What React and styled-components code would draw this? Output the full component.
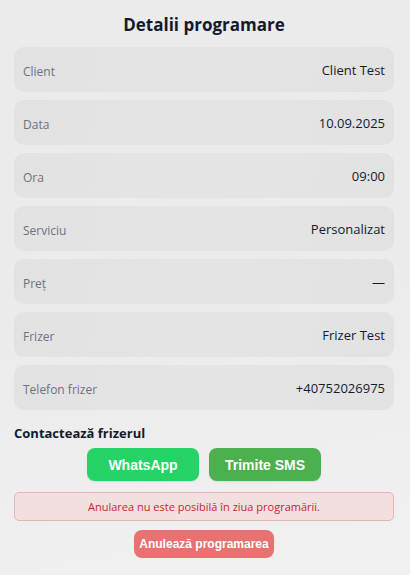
import React from 'react';
import styled, { createGlobalStyle } from 'styled-components';

const GlobalStyle = createGlobalStyle`
  html, body {
    margin: 0;
    padding: 0;
    background: #2b2b2b;
  }
  * {
    box-sizing: border-box;
  }
`;

const Sheet = styled.div`
  width: 410px;
  min-height: 575px;
  background: linear-gradient(170deg, #ebebeb 0%, #ececec 55%, #f1f1f1 100%);
  padding: 11px 16px 16px 14px;
  font-family: 'Open Sans', 'Noto Sans', sans-serif;
  display: flex;
  flex-direction: column;
`;

const Title = styled.h2`
  margin: 0 0 9px;
  font-size: 17px;
  line-height: 27px;
  font-weight: 700;
  color: #141a2e;
  text-align: center;
`;

const List = styled.div`
  display: flex;
  flex-direction: column;
  gap: 8px;
`;

const Row = styled.div`
  height: 45px;
  border-radius: 10px;
  background: linear-gradient(100deg, #e2e2e2 0%, #e5e5e5 50%, #e2e2e2 100%);
  padding: 0 9px;
  display: flex;
  justify-content: space-between;
  align-items: center;
`;

const Label = styled.span`
  font-size: 12px;
  color: #6b7280;
  padding-top: 3px;
`;

const Value = styled.span`
  font-size: 13px;
  font-weight: 500;
  color: #141a2e;
`;

const SectionTitle = styled.div`
  margin-top: 14px;
  font-size: 13px;
  line-height: 18px;
  font-weight: 700;
  color: #141a2e;
`;

const Buttons = styled.div`
  margin-top: 6px;
  display: flex;
  justify-content: center;
  gap: 10px;
`;

const ContactButton = styled.button`
  width: 112px;
  height: 33px;
  padding: 0;
  border: none;
  border-radius: 8px;
  background: ${props => props.color};
  color: #fff;
  font-family: 'Liberation Sans', Arial, sans-serif;
  font-size: 14px;
  font-weight: 700;
  box-shadow: 0 1px 2px rgba(0, 0, 0, 0.08);
  cursor: pointer;
`;

const Notice = styled.div`
  margin-top: 11px;
  height: 29px;
  border: 1px solid #e6b3b7;
  border-radius: 5px;
  background: #f2e0e1;
  color: #c62828;
  font-size: 11px;
  display: flex;
  align-items: center;
  justify-content: center;
`;

const CancelButton = styled.button`
  align-self: center;
  margin-top: 9px;
  width: 140px;
  height: 28px;
  padding: 0;
  white-space: nowrap;
  border: none;
  border-radius: 8px;
  background: #e97171;
  color: #fff;
  font-family: 'Liberation Sans', Arial, sans-serif;
  font-size: 12px;
  font-weight: 700;
  cursor: not-allowed;
`;

const details = [
  ['Client', 'Client Test'],
  ['Data', '10.09.2025'],
  ['Ora', '09:00'],
  ['Serviciu', 'Personalizat'],
  ['Preț', '—'],
  ['Frizer', 'Frizer Test'],
  ['Telefon frizer', '+40752026975'],
];

const App = () => (
  <>
    <GlobalStyle />
    <Sheet>
      <Title>Detalii programare</Title>
      <List>
        {details.map(([label, value]) => (
          <Row key={label}>
            <Label>{label}</Label>
            <Value>{value}</Value>
          </Row>
        ))}
      </List>
      <SectionTitle>Contactează frizerul</SectionTitle>
      <Buttons>
        <ContactButton color="#25d366">WhatsApp</ContactButton>
        <ContactButton color="#4caf50">Trimite SMS</ContactButton>
      </Buttons>
      <Notice>Anularea nu este posibilă în ziua programării.</Notice>
      <CancelButton>Anulează programarea</CancelButton>
    </Sheet>
  </>
);

export default App;
